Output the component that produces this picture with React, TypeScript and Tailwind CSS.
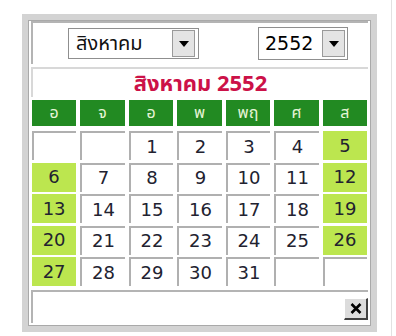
import React from 'react';

const days = ['อ', 'จ', 'อ', 'พ', 'พฤ', 'ศ', 'ส'];

const cells: (number | null)[] = [
  null, null, 1, 2, 3, 4, 5,
  6, 7, 8, 9, 10, 11, 12,
  13, 14, 15, 16, 17, 18, 19,
  20, 21, 22, 23, 24, 25, 26,
  27, 28, 29, 30, 31, null, null,
];

const thaiFont = "font-['Tahoma','Noto_Sans_Thai','DejaVu_Sans',sans-serif]";

const DropButton: React.FC = () => (
  <div className="w-[23px] h-[27px] flex items-center justify-center bg-[#e4e4e4] border border-[#9a9a9a]">
    <svg width="10" height="6" viewBox="0 0 10 6">
      <path d="M0 0 L10 0 L5 6 Z" fill="#000" />
    </svg>
  </div>
);

const App: React.FC = () => {
  return (
    <div className="w-[396px] h-[336px] bg-white flex">
      <div className="w-[392px] h-full border-r border-[#e2e2e2] pt-[14px] pl-[22px]">
        {/* Outer frame */}
        <div className="w-[355px] h-[318px] border-[6px] border-[#d3d3d3]">
          <div className="h-full border border-[#a9a9a9] pl-[2px] pr-[2px] pb-[2px] flex flex-col gap-[3px]">
            {/* Selects */}
            <div className="h-[43px] flex items-center justify-between pl-[35px] pr-[20px] border-t-2 border-l-2 border-[#b4b4b4] border-r-0 border-b-0">
              <div className="w-[131px] h-[31px] border border-[#8f8f8f] bg-white flex items-center justify-between pl-[7px] pr-[3px]">
                <span className={`${thaiFont} text-[20px] text-[#111] leading-none`}>สิงหาคม</span>
                <DropButton />
              </div>
              <div className="w-[90px] h-[33px] border border-[#8f8f8f] bg-white flex items-center justify-between pl-[6px] pr-[2px]">
                <span className="font-['DejaVu_Sans',sans-serif] text-[19px] text-black leading-none">2552</span>
                <DropButton />
              </div>
            </div>

            {/* Title */}
            <div className="h-[30px] flex items-center justify-center pt-[3px] border-t-2 border-l-2 border-[#d8d8d8] border-r-0 border-b-0">
              <span className={`${thaiFont} text-[22px] font-bold text-[#cc1148] leading-none`}>สิงหาคม 2552</span>
            </div>

            {/* Day headers */}
            <div className="mx-[1px] grid grid-cols-7 gap-x-[4.3px]">
              {days.map((d, i) => (
                <div key={i} className="h-[26px] bg-[#228a22] flex items-center justify-center">
                  <span className={`${thaiFont} text-[16px] text-[#e6f4d6] leading-none`}>{d}</span>
                </div>
              ))}
            </div>

            {/* Dates */}
            <div className="mx-[1px] mt-[2px] grid grid-cols-7 gap-x-[4.3px] gap-y-[2.5px]">
              {cells.map((n, i) => {
                const weekend = n !== null && (i % 7 === 0 || i % 7 === 6);
                return (
                  <div
                    key={i}
                    className={`h-[29px] flex items-center justify-center font-['DejaVu_Sans',sans-serif] text-[18px] text-[#222230] leading-none ${
                      weekend
                        ? 'bg-[#bce64f]'
                        : 'bg-white border-t-2 border-l-2 border-[#b0b0b0] border-r-0 border-b-0'
                    }`}
                  >
                    {n ?? ''}
                  </div>
                );
              })}
            </div>

            {/* Footer */}
            <div className="mt-[1px] h-[33px] flex items-center justify-end pt-[2px] border-t-2 border-l-2 border-[#b4b4b4] border-r-0 border-b-0">
              <button className="w-[24px] h-[22px] flex items-center justify-center bg-[#dcdcdc] border-t border-l border-white border-r-2 border-b-2 border-r-[#404040] border-b-[#404040]">
                <svg width="12" height="11" viewBox="0 0 12 11">
                  <path d="M1.5 1 L10.5 10 M10.5 1 L1.5 10" stroke="#000" strokeWidth="2.6" />
                </svg>
              </button>
            </div>
          </div>
        </div>
      </div>
    </div>
  );
};

export default App;
